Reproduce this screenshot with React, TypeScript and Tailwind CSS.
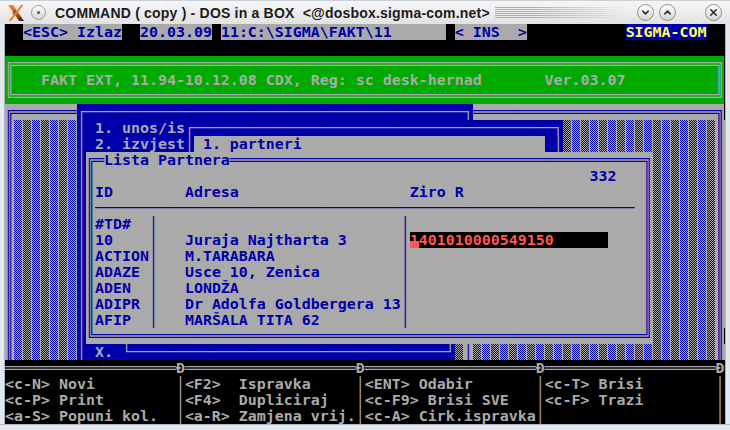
import React from 'react';
import { ChevronDown, ChevronUp, X } from 'lucide-react';

// ---------------------------------------------------------------------------
// DOS text screen: 80 x 25 cells, 9 x 16 px each
// ---------------------------------------------------------------------------

type Seg = [string, string, string, boolean?]; // text, fg, bg, cursor

const FG: Record<string, string> = {
  K: 'text-black',
  B: 'text-[#0000aa]',
  G: 'text-[#aaaaaa]',
  Y: 'text-[#ffff55]',
  R: 'text-[#ff5555]',
};

const BG: Record<string, string> = {
  K: 'bg-black',
  B: 'bg-[#0000aa]',
  G: 'bg-[#aaaaaa]',
  N: 'bg-[#00aa00]',
  S: 'bg-[#aaaaaa]',
};

const sp = (n: number) => ' '.repeat(n);
const sh = (n: number): Seg => [sp(n), 'B', 'S'];

const frame = (inner: Seg[]): Seg[] => [
  ['║', 'B', 'G'],
  sh(7),
  ['│', 'G', 'B'],
  ['║', 'B', 'G'],
  ...inner,
  ['║', 'B', 'G'],
  sh(7),
  ['║', 'B', 'G'],
];

const PARTNERS = [
  ['#TD#', ''],
  ['10', 'Juraja Najtharta 3'],
  ['ACTION', 'M.TARABARA'],
  ['ADAZE', 'Usce 10, Zenica'],
  ['ADEN', 'LONDŽA'],
  ['ADIPR', 'Dr Adolfa Goldbergera 13'],
  ['AFIP', 'MARŠALA TITA 62'],
];

const partnerRow = ([id, adr]: string[], i: number): Seg[] => {
  const left = id.padEnd(6) + '│' + sp(3) + adr.padEnd(24) + '│';
  if (i === 1) {
    return frame([
      [left, 'B', 'G'],
      ['1', 'R', 'K', true],
      ['401010000549150' + sp(6), 'R', 'K'],
      [sp(4), 'B', 'G'],
    ]);
  }
  return frame([[left + sp(26), 'B', 'G']]);
};

const HELP = [
  ['<c-N> Novi', '<F2>  Ispravka', '<ENT> Odabir', '<c-T> Brisi'],
  ['<c-P> Print', '<F4>  Dupliciraj', '<c-F9> Brisi SVE', '<c-F> Trazi'],
  ['<a-S> Popuni kol.', '<a-R> Zamjena vrij.', '<c-A> Cirk.ispravka', ''],
];

const ROWS: Seg[][] = [
  [
    ['  ', 'K', 'K'],
    ['<ESC> Izlaz', 'B', 'G'],
    ['  ', 'K', 'K'],
    ['20.03.09', 'B', 'G'],
    [' ', 'K', 'K'],
    ['11:C:\\SIGMA\\FAKT\\11'.padEnd(25), 'B', 'G'],
    [' ', 'K', 'K'],
    ['< INS  >', 'B', 'G'],
    [sp(11), 'K', 'K'],
    ['SIGMA-COM', 'Y', 'B'],
    ['  ', 'K', 'K'],
  ],
  [[sp(80), 'K', 'K']],
  [['╔' + '═'.repeat(78) + '╗', 'G', 'N']],
  [['║   FAKT EXT, 11.94-10.12.08 CDX, Reg: sc desk-hernad       Ver.03.07' + sp(10) + '║', 'G', 'N']],
  [['╚' + '═'.repeat(78) + '╝', 'G', 'N']],
  [
    ['╔' + '═'.repeat(7), 'B', 'G'],
    ['┌' + '─'.repeat(42) + '┐', 'G', 'B'],
    ['═'.repeat(27) + '╗', 'B', 'G'],
  ],
  [
    ['║', 'B', 'G'],
    sh(7),
    ['│ 1. unos/is┌' + '─'.repeat(40) + '┐', 'G', 'B'],
    sh(17),
    ['║', 'B', 'G'],
  ],
  [
    ['║', 'B', 'G'],
    sh(7),
    ['│ 2. izvjest│', 'G', 'B'],
    [' 1. partneri'.padEnd(39), 'B', 'G'],
    [' │', 'G', 'B'],
    sh(17),
    ['║', 'B', 'G'],
  ],
  [
    ['║', 'B', 'G'],
    sh(7),
    ['│', 'G', 'B'],
    ['╔═Lista Partnera' + '═'.repeat(46) + '╗', 'B', 'G'],
    sh(7),
    ['║', 'B', 'G'],
  ],
  frame([[sp(55) + '332' + sp(3), 'B', 'G']]),
  frame([['ID' + sp(8) + 'Adresa' + sp(19) + 'Ziro R' + sp(20), 'B', 'G']]),
  frame([['─'.repeat(60) + ' ', 'B', 'G']]),
  ...PARTNERS.map(partnerRow),
  [
    ['║', 'B', 'G'],
    sh(7),
    ['│', 'G', 'B'],
    ['╚' + '═'.repeat(61) + '╝', 'B', 'G'],
    sh(7),
    ['║', 'B', 'G'],
  ],
  [
    ['║', 'B', 'G'],
    sh(7),
    ['│ X. └' + '─'.repeat(35) + '┘', 'G', 'B'],
    sh(1),
    ['│', 'B', 'G'],
    sh(27),
    ['║', 'B', 'G'],
  ],
  [[Array(4).fill('═'.repeat(19) + 'Ð').join(''), 'G', 'K']],
  ...HELP.map((cols): Seg[] => [[cols.map((c) => c.padEnd(19) + '│').join(''), 'G', 'K']]),
];

const Runs = ({ text }: { text: string }) => (
  <>
    {text.split(/([\u2500-\u257f]+)/).map((part, i) =>
      /[\u2500-\u257f]/.test(part) ? (
        <span key={i} className="font-normal">{part}</span>
      ) : (
        part
      )
    )}
  </>
);

// the ▒ cell: 1px blue/grey checker, 9th pixel column left grey
const ShadeDefs = () => (
  <svg width="0" height="0" className="absolute">
    <defs>
      <pattern id="shade" width="9" height="2" patternUnits="userSpaceOnUse">
        <rect width="9" height="2" fill="#aaaaaa" />
        {[0, 2, 4, 6].map((x) => (
          <rect key={x} x={x} y={0} width="1" height="1" fill="#0000aa" />
        ))}
        {[1, 3, 5, 7].map((x) => (
          <rect key={x} x={x} y={1} width="1" height="1" fill="#0000aa" />
        ))}
      </pattern>
    </defs>
  </svg>
);

const DosScreen = () => (
  <div className="relative w-[720px] h-[400px] bg-black overflow-hidden font-['DejaVu_Sans_Mono',monospace] text-[14.95px] leading-4 font-bold">
    <ShadeDefs />
    {ROWS.map((row, r) => (
      <div key={r} className="flex h-4">
        {row.map(([text, f, b, cursor], i) => (
          <span key={i} className={`relative h-4 overflow-hidden whitespace-pre ${FG[f]} ${BG[b]}`}>
            {b === 'S' && (
              <svg className="absolute inset-0 w-full h-full" shapeRendering="crispEdges">
                <rect width="100%" height="100%" fill="url(#shade)" />
              </svg>
            )}
            <Runs text={text} />
            {cursor && <span className="absolute left-0 bottom-0 w-[9px] h-[7px] bg-[#ff5555]" />}
          </span>
        ))}
      </div>
    ))}
  </div>
);

// ---------------------------------------------------------------------------
// Window decoration
// ---------------------------------------------------------------------------

const RoundButton = ({ children }: { children: React.ReactNode }) => (
  <div className="w-[17px] h-[17px] rounded-full border border-[#8e8e8e] bg-gradient-to-b from-white to-[#d4d4d4] flex items-center justify-center text-[#2a2a2a]">
    {children}
  </div>
);

const TitleBar = () => (
  <div className="h-[24px] flex items-center bg-gradient-to-b from-[#f6f6f6] to-[#e2e2e2] border-t border-[#c8d0dc]">
    <svg width="18" height="18" viewBox="0 0 18 18" className="ml-[7px]">
      <defs>
        <linearGradient id="xg" x1="0" y1="0" x2="1" y2="1">
          <stop offset="0" stopColor="#f39a3a" />
          <stop offset="0.55" stopColor="#c25a10" />
          <stop offset="1" stopColor="#1a1a1a" />
        </linearGradient>
      </defs>
      <path d="M1 1 L6 1 L17 17 L12 17 Z" fill="url(#xg)" />
      <path d="M16.5 1 L14 1 L1.5 17 L4 17 Z" fill="#e8822a" />
      <path d="M5 9.5 L8 6 L9 7.3 L6.4 10.8 Z" fill="#2a2a2a" opacity="0.5" />
    </svg>
    <div className="ml-[6px] w-[15px] h-[15px] rounded-full border border-[#9a9a9a] bg-gradient-to-b from-white to-[#d6d6d6] flex items-center justify-center">
      <div className="w-[3px] h-[3px] rounded-full bg-[#555]" />
    </div>
    <span className="ml-[9px] font-['Liberation_Sans',Arial,sans-serif] font-bold text-[14px] tracking-[0.2px] text-[#1b1b1b] whitespace-pre leading-none">
      COMMAND ( copy ) - DOS in a BOX  {'<@dosbox.sigma-com.net>'}
    </span>
    <div className="ml-[5px] w-[132px] h-[11px] [background-image:repeating-linear-gradient(180deg,#9fb1ca_0_1px,transparent_1px_2px)] [mask-image:linear-gradient(90deg,black_30%,transparent)]" />
    <div className="ml-auto mr-[8px] flex items-center">
      <RoundButton>
        <ChevronDown size={11} strokeWidth={3.2} />
      </RoundButton>
      <div className="ml-[5px]">
        <RoundButton>
          <ChevronUp size={11} strokeWidth={3.2} />
        </RoundButton>
      </div>
      <div className="ml-[29px]">
        <RoundButton>
          <X size={11} strokeWidth={3.4} />
        </RoundButton>
      </div>
    </div>
  </div>
);

export default function App() {
  return (
    <div className="w-[730px] h-[430px] overflow-hidden bg-[#e3e8ef] flex flex-col">
      <TitleBar />
      <div className="flex">
        <div className="w-[5px] bg-[#e3e8ef] border-r border-[#aab7c9]" />
        <DosScreen />
        <div className="w-[5px] bg-[#e3e8ef] border-l border-[#aab7c9]" />
      </div>
      <div className="flex-1 bg-[#e3e8ef] border-t border-[#aab7c9]" />
    </div>
  );
}
